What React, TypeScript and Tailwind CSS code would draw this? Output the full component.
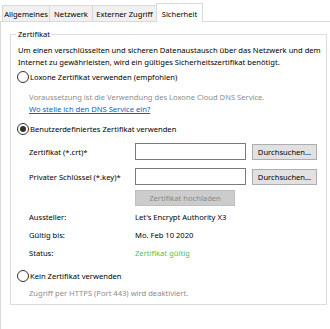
import React from "react";

const tabs = [
    { label: "Allgemeines", w: "w-[48px]" },
    { label: "Netzwerk", w: "w-[44px]" },
    { label: "Externer Zugriff", w: "w-[65px]" },
];

function Radio({ checked, label }: { checked?: boolean; label: string }) {
    return (
        <div className="flex items-center h-[12px] ml-[-1px]">
            <span className="w-[12px] h-[12px] shrink-0 rounded-full border border-[#333333] bg-white flex items-center justify-center">
                {checked && <span className="w-[6px] h-[6px] rounded-full bg-[#333333]" />}
            </span>
            <span className="ml-[1px]">{label}</span>
        </div>
    );
}

function Row({ label, children }: { label: string; children: React.ReactNode }) {
    return (
        <div className="grid grid-cols-[111px_111px_65px] gap-x-[6px] items-center">
            <span className="pl-[11px]">{label}</span>
            {children}
        </div>
    );
}

export default function App() {
    return (
        <div
            className="w-[330px] h-[329px] bg-white text-black text-[7.6px] leading-[12px] overflow-hidden whitespace-nowrap"
            style={{ fontFamily: '"Noto Sans", "Open Sans", sans-serif' }}
        >
            {/* tab strip */}
            <div className="flex items-end h-[21px] pl-[2px] bg-white">
                {tabs.map((t, i) => (
                    <div
                        key={t.label}
                        className={`${t.w} h-[16px] flex items-center justify-center bg-[#f0f0f0] border border-b-0 border-[#d9d9d9] ${i > 0 ? "-ml-px" : ""}`}
                    >
                        {t.label}
                    </div>
                ))}
                <div className="w-[47px] h-[19px] -ml-px flex items-center justify-center bg-white border border-b-0 border-[#d9d9d9] relative top-px pt-[2px]">
                    Sicherheit
                </div>
            </div>

            {/* tab page */}
            <div className="border-t border-l border-[#d9d9d9] h-[308px] pl-[9px] pt-[6px]">
                <fieldset className="m-0 p-0 min-w-0 w-[317px] h-[277px] border border-[#dcdcdc] pl-[7px] pr-0">
                    <legend className="ml-[-2px] px-[2px]">Zertifikat</legend>
                    <div className="pt-[4px]">
                        <p>Um einen verschlüsselten und sicheren Datenaustausch über das Netzwerk und dem</p>
                        <p>Internet zu gewährleisten, wird ein gültiges Sicherheitszertifikat benötigt.</p>
                    </div>

                    <div className="mt-[3px]">
                        <Radio label="Loxone Zertifikat verwenden (empfohlen)" />
                    </div>
                    <div className="pl-[11px] mt-[8px]">
                        <p className="text-[#8c8c8c]">Voraussetzung ist die Verwendung des Loxone Cloud DNS Service.</p>
                        <p className="text-[#0066cc] underline">Wo stelle ich den DNS Service ein?</p>
                    </div>

                    <div className="mt-[8px]">
                        <Radio checked label="Benutzerdefiniertes Zertifikat verwenden" />
                    </div>

                    <div className="mt-[8px] flex flex-col gap-[8px]">
                        <Row label="Zertifikat (*.crt)*">
                            <div className="h-[17px] border border-[#7a7a7a] bg-white" />
                            <button className="h-[16px] border border-[#adadad] bg-[#e1e1e1] leading-[14px]">
                                Durchsuchen...
                            </button>
                        </Row>
                        <Row label="Privater Schlüssel (*.key)*">
                            <div className="h-[17px] border border-[#7a7a7a] bg-white" />
                            <button className="h-[16px] border border-[#adadad] bg-[#e1e1e1] leading-[14px]">
                                Durchsuchen...
                            </button>
                        </Row>
                    </div>
                    <div className="mt-[5px]">
                        <Row label="">
                            <button className="w-[100px] h-[16px] border border-[#bfbfbf] bg-[#cccccc] text-[#8a8a8a] leading-[14px]">
                                Zertifikat hochladen
                            </button>
                        </Row>
                    </div>

                    <div className="mt-[5px] flex flex-col gap-[6px]">
                        <Row label="Aussteller:">
                            <span>Let's Encrypt Authority X3</span>
                        </Row>
                        <Row label="Gültig bis:">
                            <span>Mo. Feb 10 2020</span>
                        </Row>
                        <Row label="Status:">
                            <span className="text-[#4cc34c]">Zertifikat gültig</span>
                        </Row>
                    </div>

                    <div className="mt-[11px]">
                        <Radio label="Kein Zertifikat verwenden" />
                    </div>
                    <p className="pl-[11px] mt-[5px] text-[#8c8c8c]">Zugriff per HTTPS (Port 443) wird deaktiviert.</p>
                </fieldset>
            </div>
        </div>
    );
}
